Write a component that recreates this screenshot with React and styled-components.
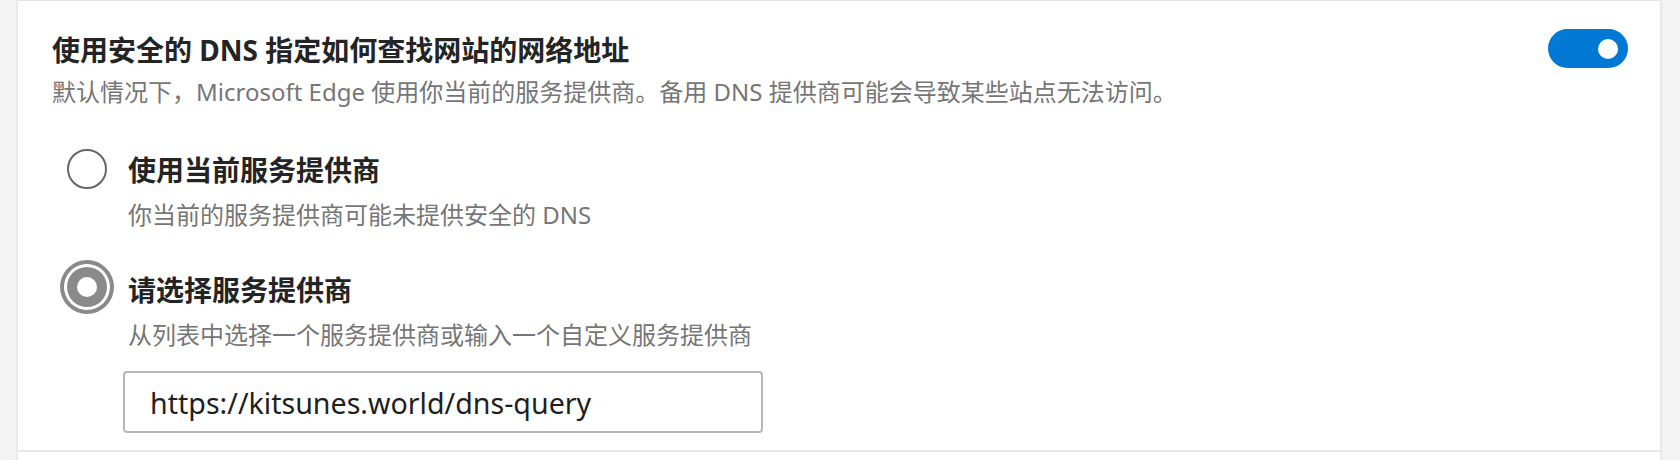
import React from 'react'
import styled, { createGlobalStyle } from 'styled-components'

const GlobalStyle = createGlobalStyle`
  html, body {
    margin: 0;
    padding: 0;
    height: 460px;
    overflow: hidden;
    background: #f3f3f3;
  }
  body {
    font-family: "Noto Sans", "Noto Sans CJK SC", sans-serif;
  }
`

const Page = styled.div`
  height: 460px;
  padding: 0 20px 0 18px;
  box-sizing: border-box;
`

const Card = styled.div`
  height: 100%;
  background: #fff;
  border-top: 1px solid #e4e4e4;
  box-shadow: 0 0 4px rgba(0, 0, 0, 0.13);
  box-sizing: border-box;
`

const Section = styled.section`
  padding: 29px 32px 17px 34px;
  border-bottom: 2px solid #e8e8e8;
`

const Header = styled.div`
  display: flex;
  justify-content: space-between;
  align-items: flex-start;
`

const Title = styled.div`
  font-size: 28px;
  line-height: 40px;
  font-weight: 700;
  color: #242424;
`

const Description = styled.div`
  margin-top: ${p => p.$gap || 5}px;
  font-size: 24px;
  line-height: 34px;
  color: #767676;
`

const Toggle = styled.div`
  position: relative;
  width: 80px;
  height: 39px;
  margin-top: -1px;
  border-radius: 20px;
  background: ${p => (p.$on ? '#0078d4' : '#fff')};
  flex-shrink: 0;

  &::after {
    content: '';
    position: absolute;
    top: 50%;
    right: 10px;
    width: 20px;
    height: 20px;
    margin-top: -10px;
    border-radius: 50%;
    background: #fff;
  }
`

const OptionList = styled.div`
  display: flex;
  flex-direction: column;
  gap: 38px;
  margin: 41px 0 0 15px;
`

const Option = styled.div`
  display: flex;
  align-items: flex-start;
  gap: 21px;
`

const Radio = styled.span`
  position: relative;
  display: block;
  flex-shrink: 0;
  width: 40px;
  height: 40px;
  box-sizing: border-box;
  border-radius: 50%;
  margin-top: ${p => (p.$checked ? -3 : -1)}px;
  border: ${p => (p.$checked ? 'none' : '2px solid #666')};
  background: ${p => (p.$checked ? '#8a8a8a' : '#fff')};
  box-shadow: ${p => (p.$checked ? '0 0 0 3px #fff, 0 0 0 7px #8a8a8a' : 'none')};

  &::after {
    content: '';
    display: ${p => (p.$checked ? 'block' : 'none')};
    position: absolute;
    left: 10px;
    top: 10px;
    width: 20px;
    height: 20px;
    border-radius: 50%;
    background: #fff;
  }
`

const OptionBody = styled.div`
  display: flex;
  flex-direction: column;
`

const OptionLabel = styled.div`
  font-size: 28px;
  line-height: 40px;
  font-weight: 700;
  color: #242424;
`

const UrlInput = styled.input`
  margin: 19px 0 0 -5px;
  width: 640px;
  height: 62px;
  box-sizing: border-box;
  padding: 0 0 0 25px;
  border: 2px solid #b8b8b8;
  border-radius: 4px;
  font-family: "Noto Sans", sans-serif;
  font-size: 28.6px;
  color: #1f1f1f;
  background: #fff;
  outline: none;
`

const options = [
  {
    id: 'current',
    label: '使用当前服务提供商',
    hint: '你当前的服务提供商可能未提供安全的 DNS',
    checked: false,
  },
  {
    id: 'custom',
    label: '请选择服务提供商',
    hint: '从列表中选择一个服务提供商或输入一个自定义服务提供商',
    checked: true,
    url: 'https://kitsunes.world/dns-query',
  },
]

const App = () => {
  return (
    <Page>
      <GlobalStyle />
      <Card>
        <Section>
          <Header>
            <div>
              <Title>使用安全的 DNS 指定如何查找网站的网络地址</Title>
              <Description>
                默认情况下，Microsoft Edge 使用你当前的服务提供商。备用 DNS 提供商可能会导致某些站点无法访问。
              </Description>
            </div>
            <Toggle $on />
          </Header>
          <OptionList>
            {options.map(opt => (
              <Option key={opt.id}>
                <Radio $checked={opt.checked} />
                <OptionBody>
                  <OptionLabel>{opt.label}</OptionLabel>
                  <Description $gap={8}>{opt.hint}</Description>
                  {opt.url && <UrlInput defaultValue={opt.url} readOnly />}
                </OptionBody>
              </Option>
            ))}
          </OptionList>
        </Section>
      </Card>
    </Page>
  )
}

export default App
